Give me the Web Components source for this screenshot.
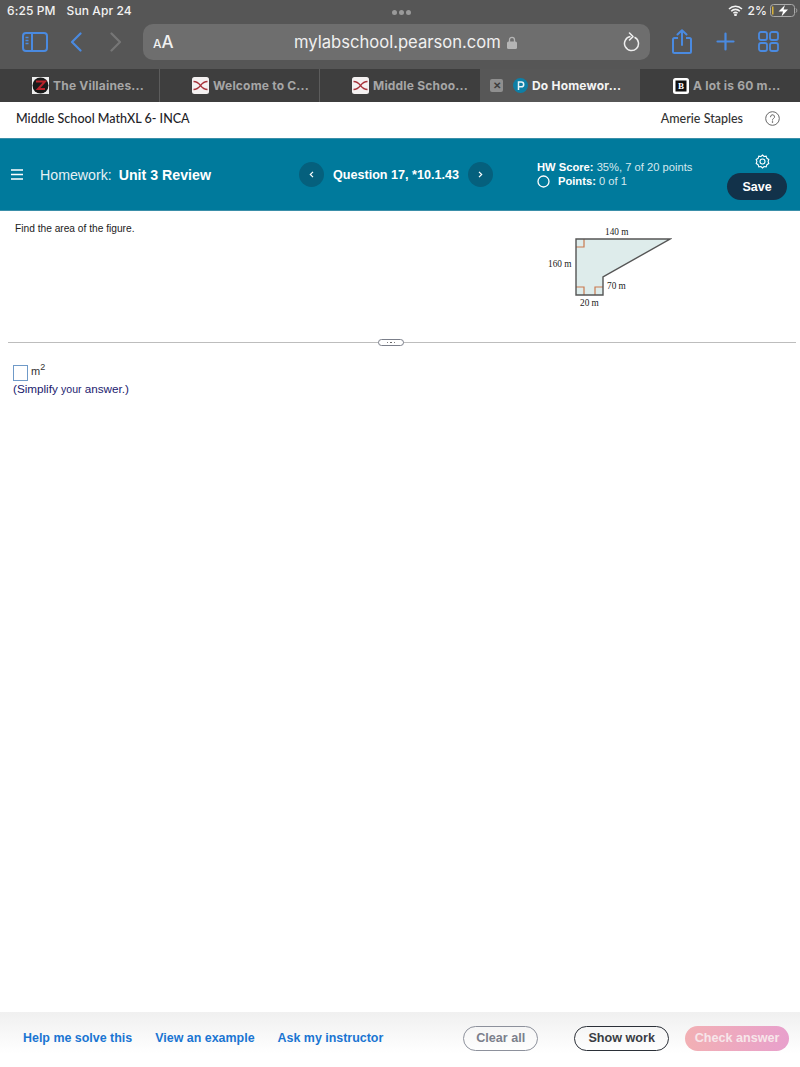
<!DOCTYPE html>
<html lang="en"><head><meta charset="utf-8"><title>Do Homework</title>
<style>
html,body{margin:0;padding:0;background:#fff}
body{width:800px;height:1067px;display:flex;flex-direction:column;overflow:hidden;font-family:"Liberation Sans",Arial,sans-serif}
q-pane{flex:1}
</style></head><body>
<browser-chrome></browser-chrome>
<tab-strip>
  <browser-tab icon="z">The Villaines...</browser-tab>
  <browser-tab icon="x">Welcome to C...</browser-tab>
  <browser-tab icon="x">Middle Schoo...</browser-tab>
  <browser-tab icon="p" active>Do Homewor...</browser-tab>
  <browser-tab icon="b">A lot is 60 m...</browser-tab>
</tab-strip>
<site-header></site-header>
<hw-bar></hw-bar>
<q-pane></q-pane>
<action-bar></action-bar>
<script>
function def(name, html){
  customElements.define(name, class extends HTMLElement{
    connectedCallback(){
      if(this.shadowRoot) return;
      const r=this.attachShadow({mode:'open'});
      r.innerHTML=typeof html==='function'?html(this):html;
    }
  });
}
const BLUE='#4a8ae0';
def('browser-chrome',`<style>
:host{display:block;height:69px;background:#565656;color:#f2f2f2;font-family:Inter,"Liberation Sans",sans-serif}
.status{height:24px;display:grid;grid-template-columns:1fr auto 1fr;align-items:center;padding:0 1px 4px 7px;box-sizing:border-box;font-size:12px;font-weight:500;letter-spacing:.1px}
.date{margin-left:11px}
.dots{display:flex;justify-content:center;gap:2px;padding:5px 3px 0 0;box-sizing:border-box}
.dots i{width:5px;height:5px;border-radius:50%;background:#9a9a9a}
.right{display:flex;align-items:center;gap:3px;justify-content:flex-end}
.tools{display:flex;align-items:center;height:35px;padding-left:22px}
.url{width:507px;height:36px;margin:0 0 0 21px;border-radius:10px;background:#6e6e6e;display:flex;align-items:center;padding:0 10px 0 10px;box-sizing:border-box}
.aa{font-size:17px;font-weight:500;width:131px}.aa small{font-size:12px}
.host{font-size:16.600px;color:#f0f0f0;margin-left:10px}
.lock{margin:2px 0 0 6px}
.re{margin-left:auto}
svg{display:block;flex:none}
</style>
<div class="status"><div><span>6:25 PM</span><span class="date">Sun Apr 24</span></div>
<div class="dots"><i></i><i></i><i></i></div>
<div class="right">
<svg width="15" height="11" viewBox="0 0 15 11" fill="none" stroke="#f2f2f2" stroke-width="1.600"><path d="M1 4a9 9 0 0 1 13 0M3.200 6.200a6 6 0 0 1 8.600 0M5.400 8.300a3 3 0 0 1 4.200 0"/><circle cx="7.500" cy="9.800" r=".6" fill="#f2f2f2"/></svg>
<span style="margin-left:1px">2%</span>
<svg width="29" height="13" viewBox="0 0 29 13"><rect x=".5" y=".5" width="24" height="12" rx="3" fill="none" stroke="#aaa"/><rect x="2" y="2.500" width="1.500" height="8" fill="#d8b23a"/><path d="M15 1 8.500 7.500h4.500l-1.500 5 6.500-7h-4.500z" fill="#fff"/><path d="M26 4.500c1 .5 1 3.500 0 4" stroke="#aaa" fill="none"/></svg>
</div></div>
<div class="tools">
<svg width="26" height="20" viewBox="0 0 26 20" fill="none" stroke="${BLUE}" stroke-width="2"><rect x="1" y="1" width="24" height="18" rx="3"/><path d="M10 1v18"/><path d="M3.500 5.500h3M3.500 8.500h3M3.500 11.500h3" stroke-width="1.500"/></svg>
<svg style="margin-left:22px" width="12" height="20" viewBox="0 0 12 20" fill="none" stroke="${BLUE}" stroke-width="2.200" stroke-linecap="round" stroke-linejoin="round"><path d="M10.500 1.500 2 10l8.500 8.500"/></svg>
<svg style="margin-left:28px" width="12" height="20" viewBox="0 0 12 20" fill="none" stroke="#767676" stroke-width="2.200" stroke-linecap="round" stroke-linejoin="round"><path d="M1.500 1.500 10 10l-8.500 8.500"/></svg>
<div class="url"><span class="aa"><small>A</small>A</span><span class="host">mylabschool.pearson.com</span>
<svg class="lock" width="10" height="13" viewBox="0 0 10 13"><path d="M2.500 6V3.800a2.500 2.500 0 0 1 5 0V6" fill="none" stroke="#b5b5b5" stroke-width="1.300"/><rect y="5.500" width="10" height="7.500" rx="1.500" fill="#b5b5b5"/></svg>
<svg class="re" width="17" height="20" viewBox="0 0 17 20" fill="none" stroke="#eee" stroke-width="1.500"><path d="M11.500 5.200a7 7 0 1 1-4-.6"/><path d="M6.500 1 10 4.600 6.500 8" stroke-linecap="round" stroke-linejoin="round"/></svg></div>
<svg style="margin-left:22px" width="20" height="25" viewBox="0 0 20 25" fill="none" stroke="${BLUE}" stroke-width="2"><path d="M6 9H2.500A1.500 1.500 0 0 0 1 10.500v12A1.500 1.500 0 0 0 2.500 24h15a1.500 1.500 0 0 0 1.500-1.500v-12A1.500 1.500 0 0 0 17.500 9H14"/><path d="M10 16V1.500M5.500 5.500 10 1.200l4.500 4.300" stroke-linecap="round" stroke-linejoin="round"/></svg>
<svg style="margin-left:24px" width="19" height="19" viewBox="0 0 19 19" fill="none" stroke="${BLUE}" stroke-width="2.200" stroke-linecap="round"><path d="M9.500 1.500v16M1.500 9.500h16"/></svg>
<svg style="margin-left:23px" width="21" height="21" viewBox="0 0 21 21" fill="none" stroke="${BLUE}" stroke-width="1.800"><rect x="1" y="1" width="8" height="8" rx="2"/><rect x="12" y="1" width="8" height="8" rx="2"/><rect x="1" y="12" width="8" height="8" rx="2"/><rect x="12" y="12" width="8" height="8" rx="2"/></svg>
</div>`);
def('tab-strip',`<style>:host{display:grid;grid-template-columns:repeat(5,160px);height:33px;background:#3e3e3e}</style><slot></slot>`);
const ICONS={
z:`<svg width="17" height="17" viewBox="0 0 17 17"><rect width="17" height="17" fill="#eee"/><circle cx="8.500" cy="8.500" r="8" fill="#1a1a1a"/><path d="M4 4.500h9L6 12h7" fill="none" stroke="#b8222a" stroke-width="2"/></svg>`,
x:`<svg width="17" height="17" viewBox="0 0 17 17"><rect width="17" height="17" rx="2.500" fill="#f4f1f1"/><path d="M1.500 4.500c3 0 5.500 2 7 4 1.500-2 4-4 7-4M1.500 12.500c3 0 5.500-2 7-4 1.500 2 4 4 7 4" fill="none" stroke="#a8343c" stroke-width="1.300"/></svg>`,
p:`<svg width="15" height="15" viewBox="0 0 15 15" style="margin-left:-1px"><circle cx="7.500" cy="7.500" r="7.500" fill="#0e7fa6"/><path d="M5.500 12V4h2.800a2.400 2.400 0 0 1 0 4.800H6" fill="none" stroke="#e8f4f8" stroke-width="1.500"/></svg>`,
b:`<svg width="16" height="16" viewBox="0 0 16 16"><rect width="16" height="16" rx="2.500" fill="#fff"/><rect x="2.500" y="2.500" width="11" height="11" fill="#111"/><text x="8" y="11.300" text-anchor="middle" font-family="Liberation Serif,serif" font-weight="700" font-size="9" fill="#fff">B</text></svg>`};
def('browser-tab',el=>{const a=el.hasAttribute('active');const i=el.getAttribute('icon');
const n=[...el.parentNode.children].indexOf(el);
const left={0:32,1:32,2:32,3:34,4:33}[n];
return `<style>:host{display:flex;align-items:center;height:33px;box-sizing:border-box;padding-left:${a?10:left}px;
background:${a?'#575757':'transparent'};color:${a?'#f4f4f4':'#a6a6a6'};font:700 12px Inter,"Liberation Sans",sans-serif;letter-spacing:.2px;white-space:nowrap;overflow:hidden;
${!a&&n<2?'border-right:1px solid #5c5c5c;':''}}
svg{display:block;flex:none}.t{margin-left:4px}
.c{width:13px;height:13px;background:#8f8f8f;border-radius:2px;color:#3e3e3e;font-size:10px;line-height:13px;text-align:center;letter-spacing:0;margin-right:11px}</style>
${a?'<span class="c">✕</span>':''}${ICONS[i]}<span class="t"><slot></slot></span>`});
def('site-header',`<style>:host{display:flex;align-items:center;height:36px;padding:0 20px 4px 16px;box-sizing:border-box;background:#fff;color:#1e2328;font:500 12.560px Lato,Inter,sans-serif}
.n{margin-left:auto;font-size:12.500px;color:#333}
svg{display:block;margin-left:22px}</style>
<span>Middle School MathXL 6- INCA</span><span class="n">Amerie Staples</span>
<svg width="15" height="15" viewBox="0 0 15 15" fill="none" stroke="#666" stroke-width="1"><circle cx="7.500" cy="7.500" r="6.800"/><path d="M5.500 5.800a2 2 0 1 1 3 1.700c-.7.4-1 .8-1 1.600" stroke-linecap="round"/><circle cx="7.500" cy="11" r=".4" fill="#666"/></svg>`);
def('hw-bar',`<style>:host{display:flex;align-items:center;height:73px;box-sizing:border-box;background:#007a9c;color:#fff;padding:0 13px 0 11px;font-size:13.500px;border-top:1px solid #3a8fa9;border-bottom:1px solid #3a8fa9}
svg{display:block;flex:none}
.hw{margin-left:17px;color:#e6f1f5;font-size:14.200px;white-space:pre}.hw b{color:#fff;margin-left:3px}
.rnd{width:25px;height:25px;border-radius:50%;background:#05607d;display:flex;align-items:center;justify-content:center;flex:none}
.q{font-weight:700;font-size:12.600px;margin:0 9px;white-space:nowrap}
.nav{display:flex;align-items:center;margin-left:88px}
.score{margin-left:44px;font-size:11.200px;line-height:14px;color:#d5e8ee;margin-top:-1px}.score b{color:#fff}
.score div{display:flex;align-items:center;white-space:pre}
.end{margin-left:auto;padding-top:5px;display:flex;flex-direction:column;align-items:center;gap:4px}
.end svg{margin-left:10px}
.save{width:60px;height:27px;border-radius:14px;background:#12324a;color:#fff;font-weight:700;font-size:12.500px;display:flex;align-items:center;justify-content:center}
</style>
<svg width="12" height="11" viewBox="0 0 12 11" stroke="#fff" stroke-width="1.300"><path d="M0 1h12M0 5.500h12M0 10h12"/></svg>
<span class="hw">Homework:<b> Unit 3 Review</b></span>
<div class="nav"><span class="rnd"><svg width="5" height="7" viewBox="0 0 5 7" fill="none" stroke="#fff" stroke-width="1.200"><path d="M4 .8 1.300 3.500 4 6.200"/></svg></span>
<span class="q">Question 17, *10.1.43</span>
<span class="rnd"><svg width="5" height="7" viewBox="0 0 5 7" fill="none" stroke="#fff" stroke-width="1.200"><path d="M1 .8 3.700 3.500 1 6.200"/></svg></span></div>
<div class="score"><div><b>HW Score:</b> 35%, 7 of 20 points</div>
<div><svg width="13" height="13" viewBox="0 0 13 13" fill="none" stroke="#fff" stroke-width="1.300" style="margin-right:8px"><circle cx="6.500" cy="6.500" r="5.500"/></svg><b>Points:</b> 0 of 1</div></div>
<div class="end"><svg width="15" height="15" viewBox="0 0 15 15" fill="none" stroke="#fff" stroke-width="1.100"><path d="M7.500 1 9 2.500l2.200-.3.7 2.100 1.900 1.200-.7 2 .7 2-1.900 1.200-.7 2.100L9 12.500 7.500 14 6 12.500l-2.200.3-.7-2.100-1.900-1.200.7-2-.7-2 1.900-1.200.7-2.100L6 2.500z"/><circle cx="7.500" cy="7.500" r="2.500"/></svg><span class="save">Save</span></div>`);
def('q-pane',`<style>:host{display:block;background:#fff;font-family:"Liberation Sans",Arial,sans-serif}
.top{display:flex;height:131px;box-sizing:border-box;padding:12px 0 0 15px;font-size:10.200px;color:#222}
svg{display:block}
.txt{width:120px;flex:none;white-space:nowrap}
.fig{margin:-12px 0 0 397px;flex:none}
text{font:9.300px "Liberation Serif",serif;fill:#222}
.div{display:flex;align-items:center;margin:0 4px 0 8px;height:1px;background:#bdbdbd;justify-content:center;padding-right:22px}
.grip{width:24px;height:5px;border:1px solid #7b7f8a;border-radius:4px;background:#fff;display:flex;align-items:center;justify-content:center;gap:2px}
.grip i{width:1.500px;height:1.500px;background:#555;border-radius:50%}
.ans{padding:22px 0 0 13px;font-size:11px;color:#333}
.row{display:flex;align-items:flex-start;height:16px}
.box{width:13px;height:14px;border:1px solid #6f9ac8;display:block;margin-right:3px}
sup{font-size:9px;line-height:0}
.hint{color:#1b1a6e;font-size:11.700px;line-height:15px}.hint small{font-size:10.500px}
</style>
<div class="top"><span class="txt">Find the area of the figure.</span>
<svg class="fig" width="140" height="100" viewBox="532 211 140 100" role="img">
<polygon points="576,239 670,239 603,277 603,295 576,295" fill="#deeceb"/>
<path d="M576 247h8v-8M576 287h8v8M595 295v-8h8" fill="none" stroke="#c9794f" stroke-width="1.200"/>
<polygon points="576,239 670,239 603,277 603,295 576,295" fill="none" stroke="#555" stroke-width="1.400"/>
<text x="605" y="235">140 m</text><text x="548" y="267">160 m</text><text x="607" y="289">70 m</text><text x="580" y="306">20 m</text>
</svg></div>
<div class="div"><span class="grip"><i></i><i></i><i></i></span></div>
<div class="ans"><div class="row"><span class="box"></span><span>m<sup>2</sup></span></div>
<div class="hint">(Simplify <small>your</small> answer.)</div></div>`);
def('action-bar',`<style>:host{display:flex;align-items:center;height:55px;box-sizing:border-box;padding:0 11px 3px 23px;background:linear-gradient(#f0f0f0,#fff 75%);font:700 12.450px "Liberation Sans",Arial,sans-serif}
a{color:#1a75d2;margin-right:23px;white-space:nowrap}
.b{height:25px;box-sizing:border-box;border-radius:13px;display:flex;align-items:center;justify-content:center;white-space:nowrap;font-size:12.600px}
.c{margin-left:80px;width:75px;border:1.500px solid #8d919c;color:#7b7f8c}
.s{margin-left:36px;width:95px;border:1.500px solid #2b3038;color:#3a3d44}
.k{margin-left:16px;width:104px;color:#f7e6ea;background:linear-gradient(90deg,#f2b0b4,#e8a0cc)}
</style><a>Help me solve this</a><a>View an example</a><a style="margin-right:0">Ask my instructor</a>
<span class="b c">Clear all</span><span class="b s">Show work</span><span class="b k">Check answer</span>`);
</script>
</body></html>
